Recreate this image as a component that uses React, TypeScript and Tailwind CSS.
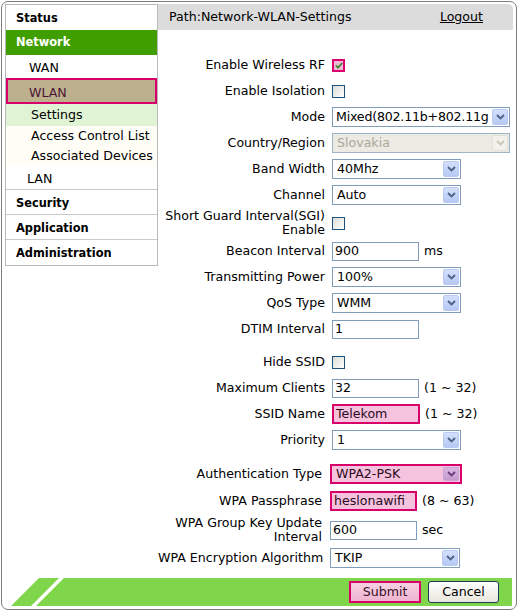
import React from "react";

function Chevron({ color }: { color: string }) {
  return (
    <svg width="9" height="6" viewBox="0 0 9 6">
      <path d="M1 1 L4.5 4.5 L8 1" fill="none" stroke={color} strokeWidth="1.8" />
    </svg>
  );
}

function Select({ w, value, tone = "normal", tight = false }: { w: string; value: string; tone?: "normal" | "pink" | "disabled"; tight?: boolean }) {
  const box =
    tone === "pink"
      ? "border-2 border-[#d8006b] bg-[#f6c3df] text-[#2a0c1c]"
      : tone === "disabled"
      ? "border border-[#9fb3c8] bg-[#ebeae3] text-[#aca899]"
      : "border border-[#7f9db9] bg-white text-black";
  const arrow =
    tone === "pink"
      ? "bg-linear-to-b from-[#d9b6e0] to-[#c49bd0] border-[#c8a5d4]"
      : tone === "disabled"
      ? "bg-[#f2f1ec] border-[#e2e1d8]"
      : "bg-linear-to-b from-[#d4e0fc] to-[#b6c9f6] border-[#b9c9ef]";
  const chev = tone === "pink" ? "#6b3b7c" : tone === "disabled" ? "#c9c7ba" : "#4d6185";
  return (
    <div className={`h-[20px] ${w} ${box} flex items-stretch`}>
      <div className={`flex-1 min-w-0 overflow-hidden flex items-center whitespace-nowrap ${tight ? "pl-[3px] tracking-[-0.2px]" : "pl-[4px]"}`}>{value}</div>
      <div className={`shrink-0 m-[1px] w-[16px] border rounded-[2px] flex items-center justify-center ${arrow}`}>
        <Chevron color={chev} />
      </div>
    </div>
  );
}

function Input({ w, value, pink = false }: { w: string; value: string; pink?: boolean }) {
  const box = pink
    ? "h-[20px] border-2 border-[#d8006b] bg-[#f6c3df] text-[#2a0c1c] pl-[2px]"
    : "h-[19px] border border-[#7f9db9] bg-white text-black pl-[2px]";
  return <div className={`${box} ${w} flex items-center whitespace-nowrap overflow-hidden`}>{value}</div>;
}

function Check({ checked = false }: { checked?: boolean }) {
  if (checked) {
    return (
      <div className="w-[13px] h-[13px] border-2 border-[#d8006b] bg-[#f3b8d6] flex items-center justify-center">
        <svg width="8" height="7" viewBox="0 0 8 7">
          <path d="M0.8 3.4 L3 5.6 L7.2 1" fill="none" stroke="#3f8a2c" strokeWidth="1.8" />
        </svg>
      </div>
    );
  }
  return <div className="w-[13px] h-[13px] border border-[#1c5180] bg-linear-to-br from-[#dcdcd7] to-white" />;
}

function Row1({ label, h = "h-[26px]", children }: { label: React.ReactNode; h?: string; children: React.ReactNode }) {
  return (
    <div className={`flex items-center ${h}`}>
      <div className="w-[167px] text-right whitespace-nowrap leading-[14px]">{label}</div>
      <div className="ml-[7px] flex items-center">{children}</div>
    </div>
  );
}

function Row2({ label, h = "h-[26px]", children }: { label: React.ReactNode; h?: string; children: React.ReactNode }) {
  return (
    <div className={`flex items-center ${h}`}>
      <div className="w-[164px] text-right whitespace-nowrap leading-[14px]">{label}</div>
      <div className="ml-[8px] flex items-center">{children}</div>
    </div>
  );
}

function Suffix({ children }: { children: React.ReactNode }) {
  return <span className="ml-[5px] whitespace-nowrap">{children}</span>;
}

export default function App() {
  return (
    <div className="font-['DejaVu_Sans',Verdana,sans-serif] text-[12.6px] text-black bg-white w-[520px] h-[612px] overflow-hidden">
      <div className="ml-[1px] mt-[1px] w-[516px] h-[609px] border border-[#7c7c7c] rounded-[7px] pl-[3px] pr-[3px] pt-[2px] pb-[3px] flex flex-col">
        <div className="flex items-start">
          {/* Sidebar */}
          <div className="w-[153px] border border-[#b9b9b9] flex flex-col">
            <div className="h-[25px] flex items-center pl-[10px] pt-[2px] font-bold text-[11.4px]">Status</div>
            <div className="h-[25px] flex items-center pl-[10px] pt-[1px] font-bold text-[11.4px] text-white bg-[#409e00]">Network</div>
            <div className="h-[23px] flex items-center pl-[23px] pt-[4px]">WAN</div>
            <div className="h-[26px] flex items-center pl-[21px] pt-[5px] border-2 border-[#d8006b] bg-[#bdb08d] text-[#4a1436]">WLAN</div>
            <div className="h-[22px] flex items-center pl-[25px] pt-[1px] bg-[#e1f3d5]">Settings</div>
            <div className="h-[20px] flex items-center pl-[25px] pt-[1px] bg-[#fefef7]">Access Control List</div>
            <div className="h-[20px] flex items-center pl-[25px] pt-[1px] bg-[#fefef7]">Associated Devices</div>
            <div className="h-[24px] flex items-center pl-[21px] pt-[3px] border-b border-[#c9c9c9]">LAN</div>
            <div className="h-[25px] flex items-center pl-[10px] pt-[3px] font-bold text-[11.4px] border-b border-[#c9c9c9]">Security</div>
            <div className="h-[25px] flex items-center pl-[10px] pt-[3px] font-bold text-[11.4px] border-b border-[#c9c9c9]">Application</div>
            <div className="h-[25px] flex items-center pl-[10px] pt-[3px] font-bold text-[11.4px]">Administration</div>
          </div>

          {/* Main */}
          <div className="flex-1 flex flex-col">
            <div className="h-[26px] bg-[#dcdcdc] rounded-tr-[5px] flex items-center justify-between pl-[11px] pr-[30px]">
              <span>Path:Network-WLAN-Settings</span>
              <span className="underline">Logout</span>
            </div>
            <div className="pt-[22px] flex flex-col">
              <Row1 label="Enable Wireless RF"><Check checked /></Row1>
              <Row1 label="Enable Isolation"><Check /></Row1>
              <Row1 label="Mode"><Select w="w-[178px]" value="Mixed(802.11b+802.11g" tight /></Row1>
              <Row1 label="Country/Region"><Select w="w-[178px]" value="Slovakia" tone="disabled" /></Row1>
              <Row1 label="Band Width"><Select w="w-[129px]" value="40Mhz" /></Row1>
              <Row1 label="Channel"><Select w="w-[129px]" value="Auto" /></Row1>
              <Row1 label={<>Short Guard Interval(SGI)<br />Enable</>} h="h-[30px]"><Check /></Row1>
              <Row1 label="Beacon Interval"><Input w="w-[87px]" value="900" /><Suffix>ms</Suffix></Row1>
              <Row1 label="Transmitting Power"><Select w="w-[129px]" value="100%" /></Row1>
              <Row1 label="QoS Type"><Select w="w-[129px]" value="WMM" /></Row1>
              <Row1 label="DTIM Interval"><Input w="w-[87px]" value="1" /></Row1>
              <div className="h-[7px]" />
              <Row1 label="Hide SSID"><Check /></Row1>
              <Row1 label="Maximum Clients"><Input w="w-[87px]" value="32" /><Suffix>(1 ~ 32)</Suffix></Row1>
              <Row1 label="SSID Name"><Input w="w-[88px]" value="Telekom" pink /><Suffix>(1 ~ 32)</Suffix></Row1>
              <Row1 label="Priority"><Select w="w-[129px]" value="1" /></Row1>
              <div className="h-[8px]" />
              <Row2 label="Authentication Type"><Select w="w-[132px]" value="WPA2-PSK" tone="pink" /></Row2>
              <Row2 label="WPA Passphrase" h="h-[28px]"><Input w="w-[87px]" value="heslonawifi" pink /><Suffix>(8 ~ 63)</Suffix></Row2>
              <Row2 label={<>WPA Group Key Update<br />Interval</>} h="h-[30px]"><Input w="w-[87px]" value="600" /><Suffix>sec</Suffix></Row2>
              <Row2 label="WPA Encryption Algorithm"><Select w="w-[130px]" value="TKIP" /></Row2>
            </div>
          </div>
        </div>

        {/* Footer */}
        <div className="mt-auto h-[28px] flex pr-[1px]">
          <svg width="70" height="28" viewBox="0 0 70 28" className="shrink-0">
            <polygon points="6,28 34,0 54,0 26,28" fill="#80d64a" />
            <polygon points="31,28 59,0 70,0 70,28" fill="#80d64a" />
          </svg>
          <div className="flex-1 bg-[#80d64a] flex items-center justify-end pr-[13px] gap-[7px]">
            <div className="w-[72px] h-[22px] border-2 border-[#d8006b] bg-linear-to-b from-[#f7d0e3] to-[#eeb3d0] flex items-center justify-center text-[#3a1228]">Submit</div>
            <div className="w-[71px] h-[22px] border border-[#1f3a5f] rounded-[3px] bg-linear-to-b from-white to-[#e8e6dc] flex items-center justify-center">Cancel</div>
          </div>
        </div>
      </div>
    </div>
  );
}
